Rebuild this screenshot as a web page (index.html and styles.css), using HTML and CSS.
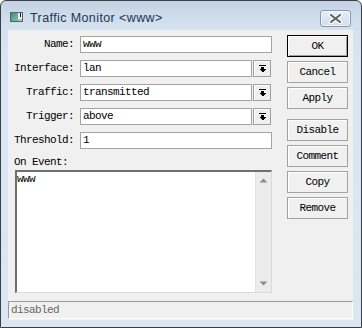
FILE: index.html
```html
<!DOCTYPE html>
<html>
<head>
<meta charset="utf-8">
<link rel="stylesheet" href="styles.css">
</head>
<body>
<div class="window">
  <div class="titlebar">
    <svg class="app-icon" width="13" height="10" viewBox="0 0 13 10" shape-rendering="crispEdges">
      <defs>
        <linearGradient id="g1" x1="0" y1="0" x2="1" y2="1">
          <stop offset="0" stop-color="#3f8f86"/>
          <stop offset="1" stop-color="#7fc3a0"/>
        </linearGradient>
      </defs>
      <rect x="0" y="0" width="13" height="10" fill="#5a6068"/>
      <rect x="1" y="1" width="11" height="8" fill="#e8eef2"/>
      <rect x="1" y="1" width="7" height="8" fill="url(#g1)"/>
      <rect x="10" y="1" width="1" height="4" fill="#111"/>
      <rect x="8" y="7" width="4" height="2" fill="#b8c0c8"/>
    </svg>
    <span class="title">Traffic Monitor &lt;www&gt;</span>
    <div class="close">
      <svg width="15" height="11" viewBox="0 0 15 11">
        <path d="M3 2 L12 9 M12 2 L3 9" stroke="#ffffff" stroke-width="4.5" stroke-linecap="round" fill="none"/>
        <path d="M3 2 L12 9 M12 2 L3 9" stroke="#5b6470" stroke-width="2.2" stroke-linecap="round" fill="none"/>
      </svg>
    </div>
  </div>
  <div class="client">
    <div class="main">
      <div class="form">
        <div class="row">
          <span class="lbl">Name:</span>
          <div class="field">www</div>
        </div>
        <div class="row">
          <span class="lbl">Interface:</span>
          <div class="field combo">lan</div>
          <div class="drop"><svg width="7" height="7" viewBox="0 0 7 7" shape-rendering="crispEdges"><rect x="0" y="0" width="7" height="1" fill="#000"/><rect x="2" y="2" width="3" height="2" fill="#000"/><polygon points="0,4 7,4 3.5,7.5" fill="#000"/></svg></div>
        </div>
        <div class="row">
          <span class="lbl">Traffic:</span>
          <div class="field combo">transmitted</div>
          <div class="drop"><svg width="7" height="7" viewBox="0 0 7 7" shape-rendering="crispEdges"><rect x="0" y="0" width="7" height="1" fill="#000"/><rect x="2" y="2" width="3" height="2" fill="#000"/><polygon points="0,4 7,4 3.5,7.5" fill="#000"/></svg></div>
        </div>
        <div class="row">
          <span class="lbl">Trigger:</span>
          <div class="field combo">above</div>
          <div class="drop"><svg width="7" height="7" viewBox="0 0 7 7" shape-rendering="crispEdges"><rect x="0" y="0" width="7" height="1" fill="#000"/><rect x="2" y="2" width="3" height="2" fill="#000"/><polygon points="0,4 7,4 3.5,7.5" fill="#000"/></svg></div>
        </div>
        <div class="row">
          <span class="lbl">Threshold:</span>
          <div class="field">1</div>
        </div>
        <div class="event-label">On Event:</div>
        <div class="textarea">
          <div class="ta-text">www</div>
          <div class="scrollbar">
            <svg width="9" height="5" viewBox="0 0 9 5"><polygon points="0.5,4.5 8.5,4.5 4.5,0.5" fill="#8c8c8c"/></svg>
            <svg width="9" height="5" viewBox="0 0 9 5"><polygon points="0.5,0.5 8.5,0.5 4.5,4.5" fill="#8c8c8c"/></svg>
          </div>
        </div>
      </div>
      <div class="buttons">
        <div class="btn default">OK</div>
        <div class="btn">Cancel</div>
        <div class="btn">Apply</div>
        <div class="btn sep">Disable</div>
        <div class="btn">Comment</div>
        <div class="btn">Copy</div>
        <div class="btn">Remove</div>
      </div>
    </div>
    <div class="status">disabled</div>
  </div>
</div>
</body>
</html>
```
FILE: styles.css
```css
html, body {
  margin: 0;
  padding: 0;
  width: 362px;
  height: 328px;
  overflow: hidden;
  background: #ffffff;
}

.window {
  box-sizing: border-box;
  width: 362px;
  height: 328px;
  border: 1px solid #3b3f45;
  border-radius: 6px 6px 0 0;
  background: linear-gradient(#c4d3e4 0px, #d3e0ee 24px, #d9e5f2 60px, #dbe6f3 100%);
  padding: 0 8px 7px 7px;
  display: flex;
  flex-direction: column;
}

.titlebar {
  box-sizing: border-box;
  height: 29px;
  padding-top: 4px;
  display: flex;
  align-items: center;
}

.app-icon {
  margin-left: 2px;
  margin-top: -1px;
  flex: none;
}

.title {
  margin-left: 7px;
  font-family: "Liberation Sans", Arial, sans-serif;
  font-size: 12.5px;
  letter-spacing: 0.4px;
  color: #1e3654;
  flex: 1;
}

.close {
  box-sizing: border-box;
  width: 31px;
  height: 17px;
  margin-right: 2px;
  align-self: flex-start;
  margin-top: 5px;
  border: 1px solid #8798b0;
  border-radius: 3px;
  background: linear-gradient(#e4ecf5, #d2deeb);
  box-shadow: inset 0 0 0 1px rgba(255,255,255,0.6);
  display: flex;
  align-items: center;
  justify-content: center;
}

.client {
  flex: 1;
  background: #f0f0f0;
  display: flex;
  flex-direction: column;
  padding-bottom: 1px;
  font-family: "Liberation Mono", "Courier New", monospace;
  font-size: 11px;
  letter-spacing: -0.6px;
  color: #000;
}

.main {
  display: flex;
  padding: 5px 5px 0 6px;
}

.form {
  width: 258px;
  margin-top: 1px;
  display: flex;
  flex-direction: column;
}

.row {
  display: flex;
  height: 17px;
  margin-bottom: 7px;
}

.row:nth-child(5) {
  margin-bottom: 0;
}

.lbl {
  width: 60px;
  margin-right: 6px;
  text-align: right;
  line-height: 17px;
  white-space: nowrap;
}

.field {
  box-sizing: border-box;
  width: 192px;
  height: 17px;
  border: 1px solid #a3a3a3;
  background: #fff;
  padding-left: 2px;
  line-height: 15px;
  white-space: nowrap;
  overflow: hidden;
}

.field.combo {
  width: 172px;
}

.drop {
  box-sizing: border-box;
  width: 18px;
  height: 17px;
  margin-left: 1px;
  border: 1px solid #a0a0a0;
  background: #f0f0f0;
  box-shadow: inset 1px 1px 0 #ffffff;
  display: flex;
  align-items: center;
  justify-content: center;
}

.event-label {
  margin-top: 6px;
  line-height: 14px;
  height: 14px;
}

.textarea {
  box-sizing: border-box;
  margin-top: 1px;
  margin-left: 1px;
  width: 257px;
  height: 123px;
  background: #fff;
  border-top: 2px solid #6f6f6f;
  border-left: 2px solid #6f6f6f;
  border-right: 1px solid #dadada;
  border-bottom: 1px solid #dadada;
  display: flex;
}

.ta-text {
  flex: 1;
  padding: 1px 0 0 0;
  line-height: 13px;
}

.scrollbar {
  box-sizing: border-box;
  width: 16px;
  background: #ececec;
  border-left: 1px solid #e2e2e2;
  display: flex;
  flex-direction: column;
  justify-content: space-between;
  align-items: center;
  padding: 6px 0 6px 0;
}

.buttons {
  margin-left: 15px;
  width: 61px;
  display: flex;
  flex-direction: column;
  gap: 4px;
}

.btn {
  box-sizing: border-box;
  height: 22px;
  border: 1px solid #a2a2a2;
  background: #f0f0f0;
  box-shadow: inset 1px 1px 0 #ffffff;
  display: flex;
  align-items: center;
  justify-content: center;
  line-height: 20px;
}

.btn.default {
  border-color: #000;
  box-shadow: inset 1px 1px 0 #ffffff, inset -1px -1px 0 #a0a0a0;
}

.btn.sep {
  margin-top: 6px;
}

.status {
  box-sizing: border-box;
  margin-top: 8px;
  height: 18px;
  border-top: 1px solid #9b9b9b;
  border-left: 1px solid #9b9b9b;
  border-right: 1px solid #ffffff;
  border-bottom: 1px solid #ffffff;
  padding-left: 2px;
  line-height: 16px;
  color: #666;
}
```
